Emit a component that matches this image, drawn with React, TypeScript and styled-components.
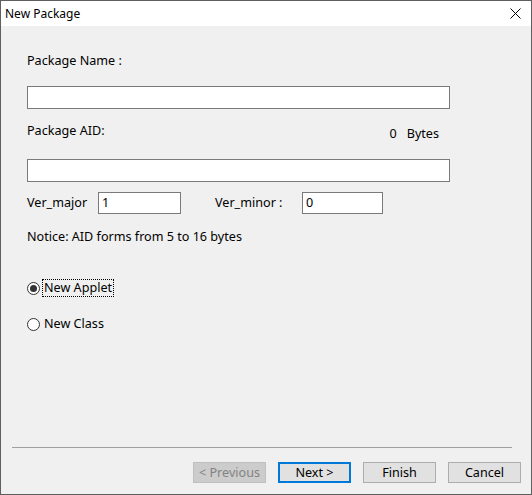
import React from "react";
import styled, { createGlobalStyle } from "styled-components";

const Global = createGlobalStyle`
  html, body { margin: 0; padding: 0; background: #f0f0f0; }
  * { box-sizing: border-box; }
  body { font-family: "Noto Sans", "Open Sans", sans-serif; font-size: 12.6px; color: #000; }
`;

const Window = styled.div`
  width: 532px;
  height: 495px;
  border: 1px solid #5f5f5f;
  display: flex;
  flex-direction: column;
  background: #f0f0f0;
`;

const TitleBar = styled.div`
  height: 25px;
  background: #fff;
  display: flex;
  align-items: center;
  justify-content: space-between;
  padding: 0 10px 0 4px;
  flex-shrink: 0;
`;

const Title = styled.span`
  font-size: 12px;
  line-height: 16px;
`;

const Body = styled.div`
  flex: 1;
  display: flex;
  flex-direction: column;
`;

const Form = styled.div`
  padding-left: 26px;
  display: flex;
  flex-direction: column;
`;

const Label = styled.div<{ $mt: number }>`
  margin-top: ${(p) => p.$mt}px;
  height: 16px;
  line-height: 16px;
  white-space: nowrap;
`;

const TextBox = styled.div<{ $w: number; $h: number }>`
  width: ${(p) => p.$w}px;
  height: ${(p) => p.$h}px;
  background: #fff;
  border: 1px solid #7a7a7a;
  padding: 0 3px;
  line-height: ${(p) => p.$h - 2}px;
  flex-shrink: 0;
`;

const Spacer = styled.div<{ $h: number }>`
  height: ${(p) => p.$h}px;
  flex-shrink: 0;
`;

const AidRow = styled.div`
  margin-top: 14px;
  width: 412px;
  height: 16px;
  display: flex;
  justify-content: space-between;
  line-height: 16px;
`;

const Count = styled.div`
  display: flex;
  gap: 10px;
  padding-top: 3px;
`;

const VerRow = styled.div`
  margin-top: 10px;
  height: 22px;
  display: flex;
  align-items: center;
`;

const VerLabel = styled.span<{ $w: number; $ml?: number }>`
  width: ${(p) => p.$w}px;
  margin-left: ${(p) => p.$ml ?? 0}px;
  line-height: 16px;
  white-space: nowrap;
`;

const RadioRow = styled.div<{ $mt: number }>`
  margin-top: ${(p) => p.$mt}px;
  height: 18px;
  display: flex;
  align-items: center;
`;

const Circle = styled.span<{ $checked?: boolean }>`
  width: 13px;
  height: 13px;
  border-radius: 50%;
  border: 1px solid #333;
  background: #fff;
  display: flex;
  align-items: center;
  justify-content: center;
  flex-shrink: 0;
  &::after {
    content: "";
    width: 7px;
    height: 7px;
    border-radius: 50%;
    background: ${(p) => (p.$checked ? "#333" : "transparent")};
  }
`;

const RadioText = styled.span<{ $focus?: boolean }>`
  margin-left: 2px;
  padding: 0 1px;
  line-height: 16px;
  border: 1px dotted ${(p) => (p.$focus ? "#000" : "transparent")};
`;

const Footer = styled.div`
  margin-top: auto;
  display: flex;
  flex-direction: column;
`;

const Separator = styled.div`
  margin: 0 19px 0 11px;
  height: 1px;
  background: #a0a0a0;
`;

const Buttons = styled.div`
  display: flex;
  justify-content: flex-end;
  gap: 12px;
  padding: 14px 10px 11px 0;
`;

const Button = styled.button<{ $variant?: "disabled" | "default" }>`
  width: 73px;
  height: 21px;
  padding: 0;
  font-family: inherit;
  font-size: 12.6px;
  line-height: 16px;
  color: ${(p) => (p.$variant === "disabled" ? "#838383" : "#000")};
  background: ${(p) => (p.$variant === "disabled" ? "#cccccc" : "#e1e1e1")};
  border: ${(p) =>
    p.$variant === "default" ? "2px solid #0078d7" : p.$variant === "disabled" ? "1px solid #bfbfbf" : "1px solid #adadad"};
`;

export default function App() {
  return (
    <>
      <Global />
      <Window>
        <TitleBar>
          <Title>New Package</Title>
          <svg width="11" height="11" viewBox="0 0 11 11">
            <path d="M0.5 0.5 L10.5 10.5 M10.5 0.5 L0.5 10.5" stroke="#000" strokeWidth="1" />
          </svg>
        </TitleBar>
        <Body>
          <Form>
            <Label $mt={27}>Package Name :</Label>
            <Spacer $h={17} />
            <TextBox $w={423} $h={23} />
            <AidRow>
              <span>Package AID:</span>
              <Count>
                <span>0</span>
                <span>Bytes</span>
              </Count>
            </AidRow>
            <Spacer $h={20} />
            <TextBox $w={423} $h={23} />
            <VerRow>
              <VerLabel $w={71}>Ver_major</VerLabel>
              <TextBox $w={83} $h={22}>1</TextBox>
              <VerLabel $ml={34} $w={87}>Ver_minor :</VerLabel>
              <TextBox $w={81} $h={22}>0</TextBox>
            </VerRow>
            <Label $mt={15}>Notice: AID forms from 5 to 16 bytes</Label>
            <RadioRow $mt={34}>
              <Circle $checked />
              <RadioText $focus>New Applet</RadioText>
            </RadioRow>
            <RadioRow $mt={18}>
              <Circle />
              <RadioText>New Class</RadioText>
            </RadioRow>
          </Form>
          <Footer>
            <Separator />
            <Buttons>
              <Button $variant="disabled">&lt; Previous</Button>
              <Button $variant="default">Next &gt;</Button>
              <Button>Finish</Button>
              <Button>Cancel</Button>
            </Buttons>
          </Footer>
        </Body>
      </Window>
    </>
  );
}
